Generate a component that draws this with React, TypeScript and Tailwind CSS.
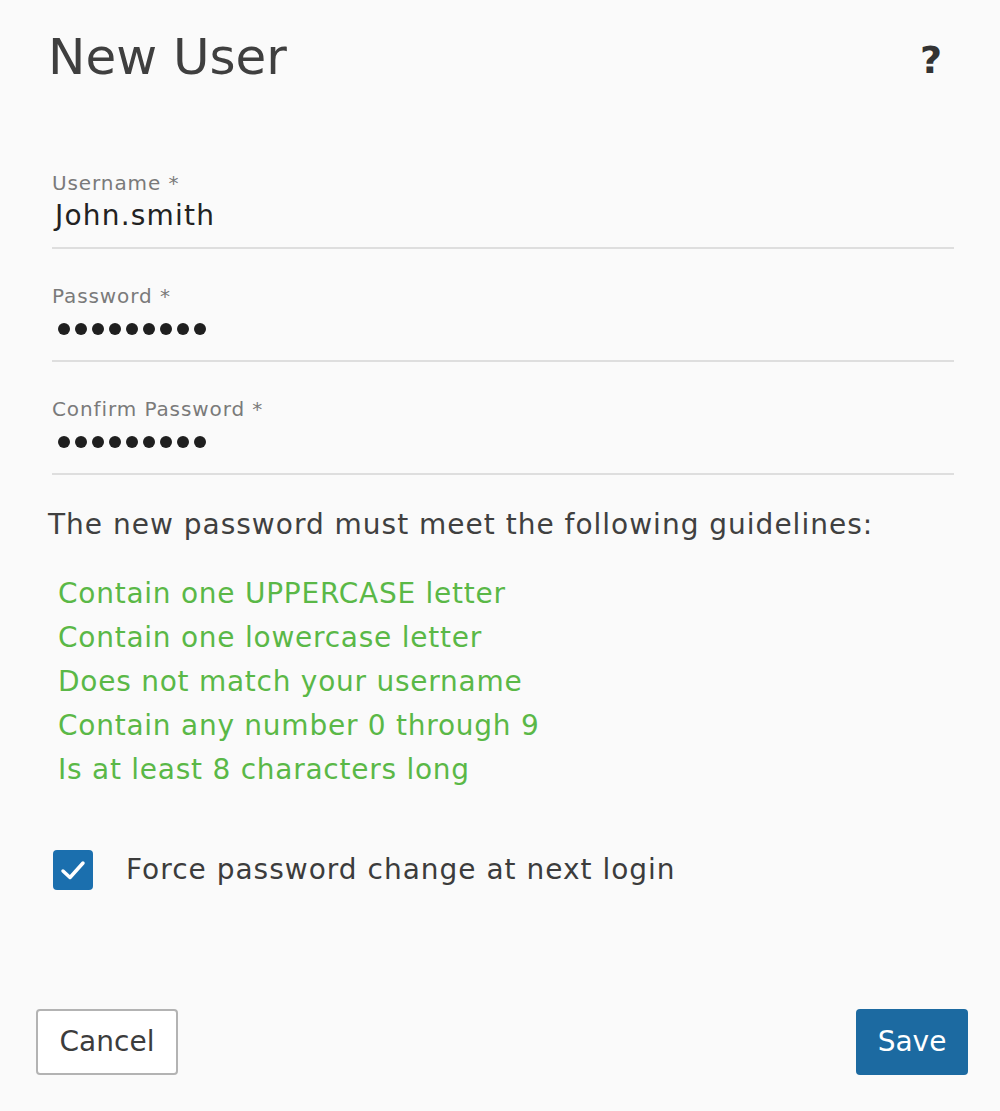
import React from "react";

const font = { fontFamily: '"DejaVu Sans", Verdana, sans-serif' };

const rules = [
  "Contain one UPPERCASE letter",
  "Contain one lowercase letter",
  "Does not match your username",
  "Contain any number 0 through 9",
  "Is at least 8 characters long",
];

function Dots() {
  return (
    <span className="ml-[6px] flex h-[36px] items-center gap-[5px]">
      {Array.from({ length: 9 }).map((_, i) => (
        <span key={i} className="h-[12px] w-[12px] rounded-full bg-[#1f1f1f]" />
      ))}
    </span>
  );
}

function Field({ label, value, secret }: { label: string; value?: string; secret?: boolean }) {
  return (
    <div className="flex flex-col border-b-2 border-[#dedede] pb-[13px]">
      <span className="text-[20px] leading-[26px] tracking-[0.9px] text-[#7a7a7a]">{label}</span>
      <div className="pt-[2px]">
        {secret ? (
          <Dots />
        ) : (
          <span className="ml-[3px] text-[28px] leading-[36px] tracking-[1.2px] text-[#222]">{value}</span>
        )}
      </div>
    </div>
  );
}

export default function App() {
  return (
    <div className="h-[1111px] w-[1000px] bg-[#fafafa] text-[#3c3c3c]" style={font}>
      <div className="flex items-start justify-between pl-[48px] pr-[58px] pt-[26px]">
        <h1 className="text-[50px] leading-[62px] text-[#3f3f3f]">New User</h1>
        <span className="mt-[12px] text-[38px] font-bold leading-[44px] text-[#333]">?</span>
      </div>

      <div className="ml-[52px] mr-[46px] mt-[82px] flex flex-col gap-[34px]">
        <Field label="Username *" value="John.smith" />
        <Field label="Password *" secret />
        <Field label="Confirm Password *" secret />
      </div>

      <p className="ml-[48px] mt-[30px] text-[28px] leading-[40px] tracking-[1px] text-[#404040]">
        The new password must meet the following guidelines:
      </p>

      <ul className="ml-[58px] mt-[27px] flex flex-col text-[28px] leading-[44px] tracking-[0.75px] text-[#5ab847]">
        {rules.map((r) => (
          <li key={r}>{r}</li>
        ))}
      </ul>

      <label className="ml-[53px] mt-[58px] flex items-center gap-[33px]">
        <span className="flex h-[40px] w-[40px] items-center justify-center rounded-[4px] bg-[#1b6fae]">
          <svg width="28" height="24" viewBox="0 0 28 24" fill="none">
            <path d="M4 13l7 6.5L24 5" stroke="#fff" strokeWidth="3.5" strokeLinecap="round" strokeLinejoin="round" />
          </svg>
        </span>
        <span className="text-[28px] leading-[36px] tracking-[1px] text-[#3c3c3c]">
          Force password change at next login
        </span>
      </label>

      <div className="mx-[32px] mt-[119px] flex justify-between pl-[4px]">
        <button className="h-[66px] w-[142px] rounded-[4px] border-2 border-[#b3b3b3] bg-white text-[28px] text-[#3c3c3c]">
          Cancel
        </button>
        <button className="h-[66px] w-[112px] rounded-[4px] bg-[#1c6aa1] text-[28px] text-white">Save</button>
      </div>
    </div>
  );
}
